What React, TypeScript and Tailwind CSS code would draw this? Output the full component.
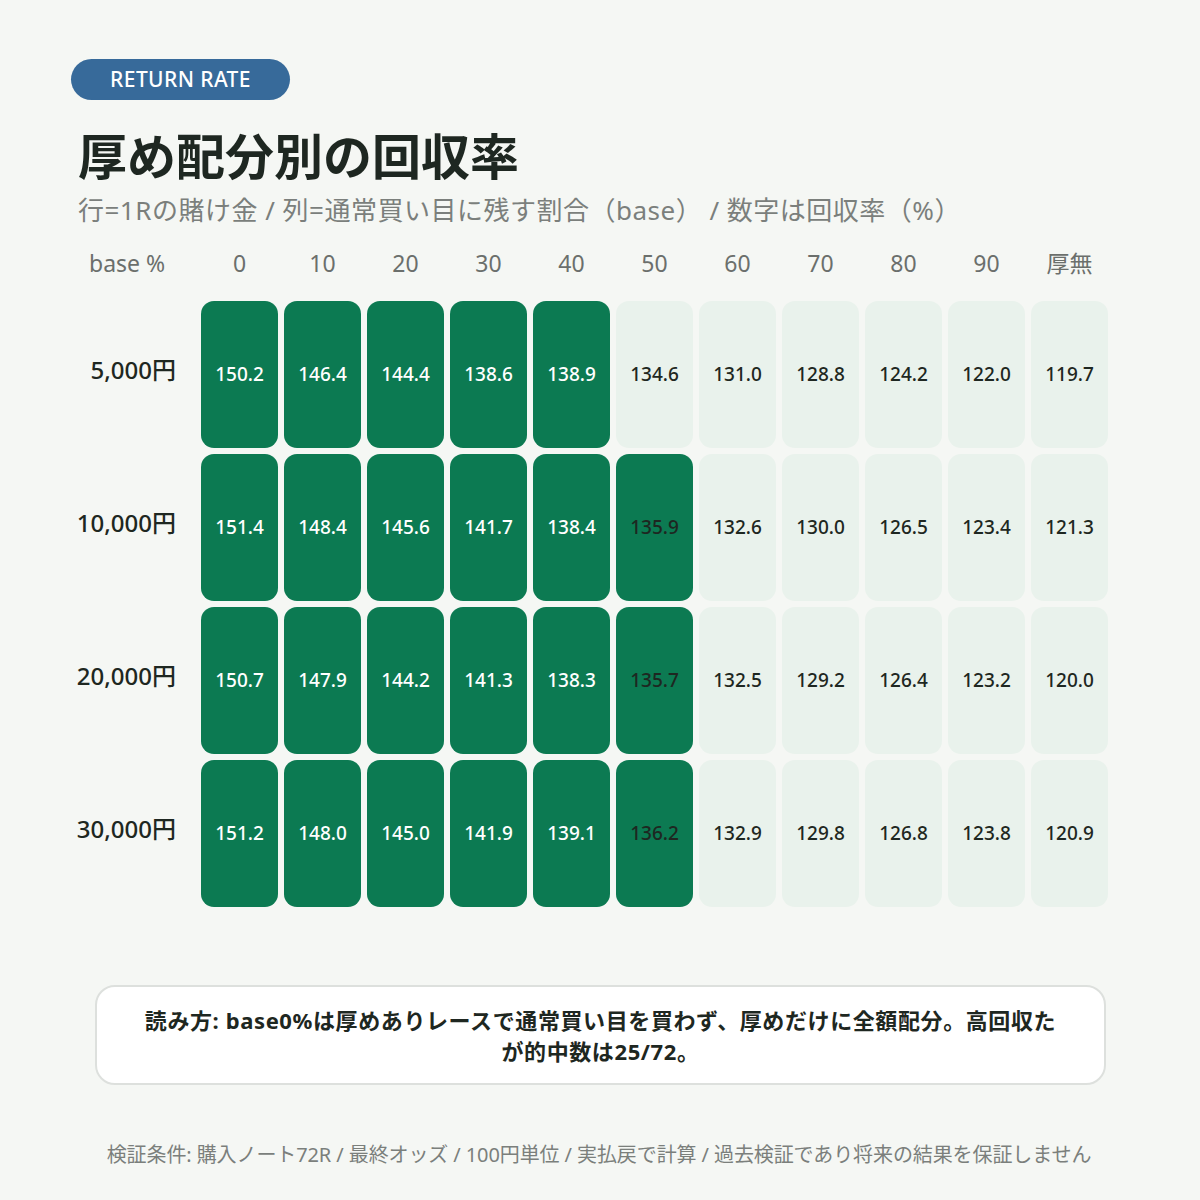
const cols = ['0', '10', '20', '30', '40', '50', '60', '70', '80', '90', '厚無']

const rows: { label: string; values: string[]; dark: number }[] = [
  { label: '5,000円', values: ['150.2', '146.4', '144.4', '138.6', '138.9', '134.6', '131.0', '128.8', '124.2', '122.0', '119.7'], dark: 5 },
  { label: '10,000円', values: ['151.4', '148.4', '145.6', '141.7', '138.4', '135.9', '132.6', '130.0', '126.5', '123.4', '121.3'], dark: 6 },
  { label: '20,000円', values: ['150.7', '147.9', '144.2', '141.3', '138.3', '135.7', '132.5', '129.2', '126.4', '123.2', '120.0'], dark: 6 },
  { label: '30,000円', values: ['151.2', '148.0', '145.0', '141.9', '139.1', '136.2', '132.9', '129.8', '126.8', '123.8', '120.9'], dark: 6 },
]

const font = { fontFamily: '"Noto Sans", "Noto Sans CJK JP", sans-serif' }

export default function App() {
  return (
    <div className="w-[1200px] h-[1200px] bg-[#f5f7f4] text-[#1f2a24] pt-[59px] px-[71px]" style={font}>
      <div className="inline-flex items-center justify-center w-[219px] h-[41px] rounded-full bg-[#376a9a] text-white text-[21px] font-medium tracking-[0.4px]">
        RETURN RATE
      </div>

      <h1 className="mt-[26px] ml-[7px] text-[49px] font-bold leading-[60px] text-[#1e2721]">厚め配分別の回収率</h1>
      <p className="ml-[7px] mt-[7px] text-[26px] leading-[34px] tracking-[0.5px] text-[#7b7f7c]">
        行=1Rの賭け金 / 列=通常買い目に残す割合（base） / 数字は回収率（%）
      </p>

      {/* Table */}
      <div className="mt-[11px] grid grid-cols-[124px_repeat(11,77px)] gap-x-[6px] gap-y-[6px]">
        <div className="h-[57px] flex items-center justify-start pl-[18px] text-[23px] text-[#6b6f6c] pb-[7px]">base %</div>
        {cols.map((c) => (
          <div key={c} className="h-[57px] flex items-center justify-center text-[23px] text-[#6b6f6c] pb-[7px]">
            {c}
          </div>
        ))}

        {rows.map((r, ri) => (
          <div key={r.label} className="contents">
            <div className="h-[147px] flex items-center justify-end pr-[19px] pb-[10px] text-[24px] font-medium text-[#1e2721]">
              {r.label}
            </div>
            {r.values.map((v, i) => {
              const dark = i < r.dark
              const darkText = dark && i === 5 && ri > 0
              return (
                <div
                  key={i}
                  className={
                    dark
                      ? 'h-[147px] rounded-[13px] bg-[#0c7a52] flex items-center justify-center text-[19px] font-medium ' +
                        (darkText ? 'text-[#1e2721]' : 'text-white')
                      : 'h-[147px] rounded-[13px] bg-[#e9f2ec] flex items-center justify-center text-[19px] font-medium text-[#1e2721]'
                  }
                >
                  {v}
                </div>
              )
            })}
          </div>
        ))}
      </div>

      {/* Note */}
      <div className="mt-[78px] ml-[24px] w-[1011px] h-[100px] rounded-[20px] border-2 border-[#dde0dd] bg-white flex flex-col items-center justify-center text-center text-[22px] font-bold leading-[31px] tracking-[0.6px] text-[#1e2721] pt-[2px]">
        <span className="whitespace-nowrap">読み方: base0%は厚めありレースで通常買い目を買わず、厚めだけに全額配分。高回収た</span>
        <span className="whitespace-nowrap">が的中数は25/72。</span>
      </div>

      <p className="mt-[55px] text-center text-[20px] leading-[30px] tracking-[-0.1px] text-[#7b7f7c] pr-[2px]">
        検証条件: 購入ノート72R / 最終オッズ / 100円単位 / 実払戻で計算 / 過去検証であり将来の結果を保証しません
      </p>
    </div>
  )
}
